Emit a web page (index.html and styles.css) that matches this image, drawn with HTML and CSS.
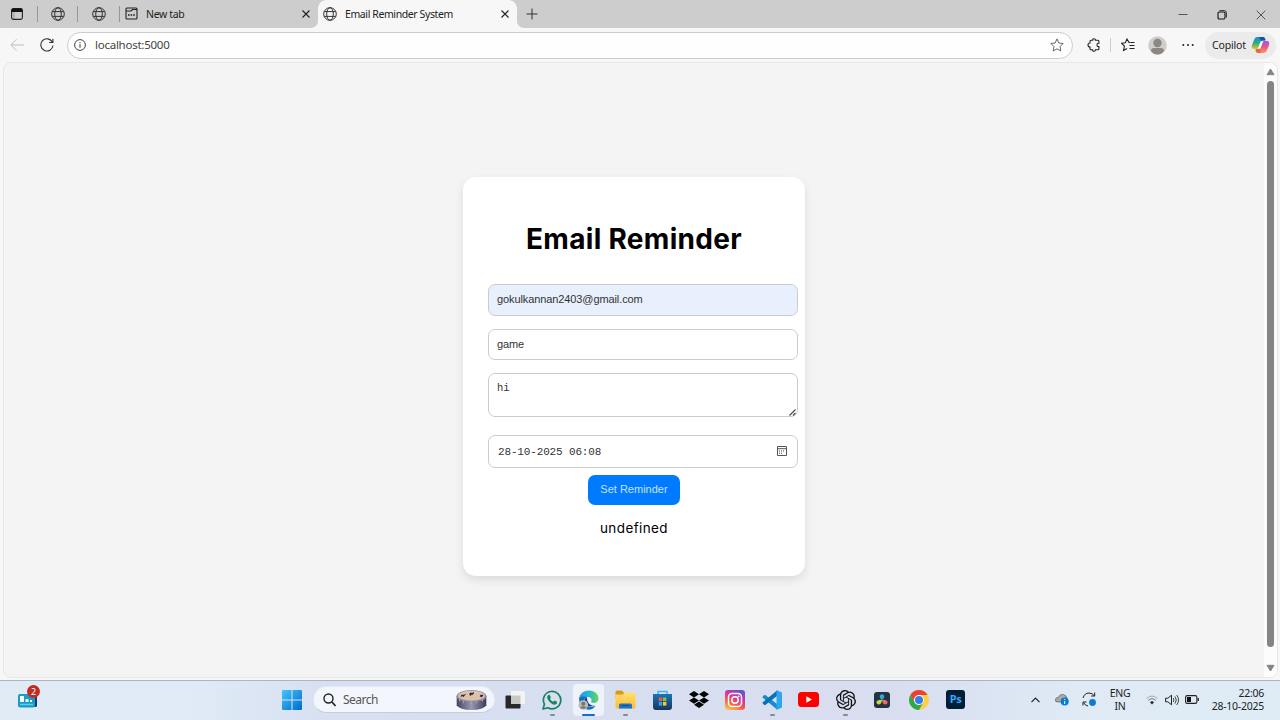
FILE: index.html
```html
<!DOCTYPE html>
<html lang="en">
<head>
<meta charset="utf-8">
<title>Email Reminder System</title>
<link rel="stylesheet" href="styles.css">
</head>
<body>
<svg class="defs" width="0" height="0">
  <symbol id="globe" viewBox="0 0 14 14"><g fill="none" stroke="#333" stroke-width="1"><circle cx="7" cy="7" r="6.3"/><ellipse cx="7" cy="7" rx="3.300" ry="6.3"/><path d="M1.3 4.6h11.4M1.3 9.4h11.4"/></g></symbol>
  <symbol id="close" viewBox="0 0 10 10"><path d="M1.5 1.5l7 7M8.5 1.5l-7 7" stroke="#222" stroke-width="1.1" fill="none"/></symbol>
</svg>
<header class="tabs">
  <div class="pin pin-a"><svg width="14" height="14" viewBox="0 0 14 14"><rect x="1.6" y="1.6" width="10.8" height="10.8" rx="1.8" fill="none" stroke="#222" stroke-width="1.1"/><path d="M1.6 5V3q0-1.500 1.500-1.500h7.800q1.500 0 1.500 1.500v2z" fill="#111"/><path d="M4 5v7" stroke="#777" stroke-width=".6"/></svg></div>
  <div class="pin pin-b"><svg width="14" height="14"><use href="#globe"/></svg></div>
  <div class="pin pin-c"><svg width="14" height="14"><use href="#globe"/></svg></div>
  <div class="tab idle"><svg width="13" height="13" viewBox="0 0 13 13"><path d="M1 3.500V2q0-1 1-1h9q1 0 1 1v9q0 1-1 1H2q-1 0-1-1zM1 4h5L7.500 2.500H12" fill="none" stroke="#222" stroke-width="1.1"/><path d="M3 8h1.600m1 0h1.600m1 0h1.600" stroke="#222" stroke-width="1.600"/></svg><span class="t-new">New tab</span><svg class="x" width="10" height="10"><use href="#close"/></svg></div>
  <div class="tab active"><svg width="14" height="14"><use href="#globe"/></svg><span class="t-mail">Email Reminder System</span><svg class="x" width="10" height="10"><use href="#close"/></svg></div>
  <div class="rest"><svg width="12" height="12" viewBox="0 0 12 12"><path d="M6 .5v11M.5 6h11" stroke="#333" stroke-width="1"/></svg>
    <div class="win"><svg class="min" width="10" height="10" viewBox="0 0 10 10"><path d="M.5 4.500h9" stroke="#555"/></svg><svg width="10" height="10" viewBox="0 0 10 10"><rect x="1" y="2" width="7" height="7" rx="1.200" fill="none" stroke="#111" stroke-width="1.100"/><path d="M2.500.600h4.700q2.200 0 2.200 2.200v4.700" fill="none" stroke="#222" stroke-width=".9"/></svg><svg width="10" height="10" viewBox="0 0 10 10"><path d="M.7.7l8.600 8.600M9.300.7L.7 9.300" stroke="#444" stroke-width=".9"/></svg></div>
  </div>
</header>
<nav class="toolbar">
  <svg class="back" width="14" height="14" viewBox="0 0 14 14"><path d="M14 7H1M6.500 1.200L.8 7l5.700 5.800" fill="none" stroke="#bbb"/></svg>
  <svg class="reload" width="14" height="14" viewBox="0 0 14 14"><path d="M12.300 4A6.100 6.100 0 1 0 13 7.500M12.900.8v3.700H9.200" fill="none" stroke="#333" stroke-width="1.100"/></svg>
  <div class="address"><svg width="12" height="12" viewBox="0 0 12 12"><circle cx="6" cy="6" r="5.400" fill="none" stroke="#444"/><path d="M6 5.200v3.500M6 3.200v1" stroke="#333"/></svg><span>localhost:5000</span><svg class="star" width="14" height="14" viewBox="0 0 16 16"><path d="M8 1l2.100 4.700 4.900.6-3.500 3.500.9 5L8 12.400l-4.400 2.400.9-5L1 6.300l4.900-.6z" fill="none" stroke="#555" stroke-linejoin="round"/></svg></div>
  <svg class="ext" width="14" height="14" viewBox="0 0 14 14"><path d="M4 2.200h1.700Q5.500.7 7 .7t1.400 1.500h2.500q1 0 1 1v2.100Q10 5.200 10 7t1.900 1.600v2.200q0 1-1 1H8.500Q8.500 13.300 7 13.300t-1.400-1.500H4q-1 0-1-1V9Q1 9 1 7t2-2V3.200q0-1 1-1z" fill="none" stroke="#222" stroke-width="1.100"/></svg>
  <i class="sep"></i>
  <svg class="fav" width="14" height="14" viewBox="0 0 14 14"><path d="M9 4.500H8L6 1 4.300 4.700l-3.700.6L3.400 8l-.8 4.500L6 10.600M9.300 4.500h4.200M8.500 7.500h5M8.500 10.500h5" fill="none" stroke="#222" stroke-width="1.100"/></svg>
  <svg class="avatar" width="19" height="19" viewBox="0 0 19 19"><circle cx="9.500" cy="9.500" r="9.300" fill="#d0cecb"/><circle cx="9.500" cy="7" r="4.200" fill="#8b8783"/><path d="M3 15q0-3 3-3h7q3 0 3 3-2.500 3.500-6.500 3.500T3 15z" fill="#8b8783"/></svg>
  <svg class="dots" width="12" height="4" viewBox="0 0 12 4"><g fill="#222"><circle cx="1.300" cy="2" r="1"/><circle cx="6" cy="2" r="1"/><circle cx="10.700" cy="2" r="1"/></g></svg>
  <div class="copilot"><span>Copilot</span><svg width="19" height="18" viewBox="0 0 19 18"><defs><linearGradient id="cl" x2="0" y2="1"><stop stop-color="#168bd9"/><stop offset=".5" stop-color="#27af83"/><stop offset="1" stop-color="#e5c52a"/></linearGradient><linearGradient id="cr" x2="0" y2="1"><stop stop-color="#a653df"/><stop offset=".5" stop-color="#ee5787"/><stop offset="1" stop-color="#ff9852"/></linearGradient></defs><path d="M6 1h6q2 0 2.500 3l-4 1-4 8H3q-3 0-2-4l2-5q1-3 3-3z" fill="url(#cl)"/><path d="M8 1h4q2 0 2.500 3.500H9.800z" fill="#194db5"/><path d="M13 17H7q-2 0-2.500-3l4-1 4-8H16q3 0 2 4l-2 5q-1 3-3 3z" fill="url(#cr)"/><path d="M4.500 13h4.300L10 17H7q-2 0-2.500-4z" fill="#f26543"/><path d="M9.500 5.500h2.200L9.500 12.500H7.300z" fill="#fff"/></svg></div>
</nav>
<main class="page">
  <section class="stage">
    <form class="card">
      <h1><span>Email Reminder</span></h1>
      <div class="field email"><span>gokulkannan2403@gmail.com</span></div>
      <div class="field subject"><span>game</span></div>
      <div class="field message"><span>hi</span><svg width="7" height="7" viewBox="0 0 7 7"><path d="M.5 6.500l6-6M4 6.500l2.500-2.500" stroke="#444" stroke-width="1.100"/></svg></div>
      <div class="field date"><span>28-10-2025 06:08</span><svg width="10" height="10" viewBox="0 0 10 10"><path d="M.5.500h9v9h-9zM.5 2.700h9" fill="none" stroke="#555"/><path d="M2 5h6M2 7.200h4" stroke="#444" stroke-dasharray="1 1"/></svg></div>
      <button type="button"><span>Set Reminder</span></button>
      <p><span>undefined</span></p>
    </form>
  </section>
  <aside class="scroll"><svg width="9" height="8" viewBox="0 0 9 8"><path d="M4.500 1L8 6.700H1z" fill="#858585" stroke="#858585" stroke-linejoin="round"/></svg><i></i><svg width="9" height="8" viewBox="0 0 9 8"><path d="M4.500 7L8 1.300H1z" fill="#858585" stroke="#858585" stroke-linejoin="round"/></svg></aside>
</main>
<footer class="taskbar">
  <div class="widget"><svg width="20" height="16" viewBox="0 0 20 16"><rect x="14" y="3" width="5" height="12" rx="1.500" fill="#173c70"/><rect y="2" width="17" height="13.500" rx="2" fill="#199bc6"/><path d="M2 4h4v6H2zM7.500 7h3v3h-3zM12 8h2v2h-2z" fill="#f3fbff"/><path d="M2 12.500h13" stroke="#53d1ee" stroke-width="1.500"/></svg><b>2</b></div>
  <svg class="start" width="20" height="20" viewBox="0 0 20 20"><defs><linearGradient id="w" x2="1" y2="1"><stop stop-color="#42c8f8"/><stop offset="1" stop-color="#0069ce"/></linearGradient></defs><path d="M0 1q0-1 1-1h8.500v9.500H0zM10.500 0H19q1 0 1 1v8.500h-9.500zM0 10.500h9.500V20H1q-1 0-1-1zM10.500 10.500H20V19q0 1-1 1h-8.500z" fill="url(#w)"/></svg>
  <div class="search"><svg width="13" height="14" viewBox="0 0 13 14"><circle cx="5.500" cy="5.500" r="4.500" fill="none" stroke="#222" stroke-width="1.400"/><path d="M9 9l3.500 4" stroke="#222" stroke-width="1.600"/></svg><span>Search</span>
    <svg class="art" width="33" height="22" viewBox="0 0 33 23"><defs><linearGradient id="drum"><stop stop-color="#454561"/><stop offset=".5" stop-color="#9a96b1"/><stop offset="1" stop-color="#3d3c57"/></linearGradient></defs><path d="M1 7v10q3 5 15.500 5T32 17V7z" fill="url(#drum)"/><ellipse cx="16.500" cy="7.500" rx="15.500" ry="6.500" fill="#8a88a0"/><ellipse cx="16.500" cy="7" rx="14" ry="5.200" fill="#dcc2a7"/><path d="M5 7.500l1-1.500h3l1-1 .5 1-1.500 1-.5 1.500-1-1H6v1.500zm9-2l1-1.500h3l1-1v1.500l-1 1.500h-2v1.500zm11 2l1-1.500h2l1 1-1.500 1-1 1-.5-1z" fill="#302050"/><path d="M4 11v2m4-.5v2.500m8-2v2.500m6-3v2.500m6-4v2" stroke="#b5b0c6" stroke-width=".9"/></svg>
  </div>
  <div class="apps">
    <div><svg width="22" height="20" viewBox="0 0 22 20"><rect x="1.500" y="5.500" width="15" height="13" rx="1" fill="#282828"/><rect x="7" y="1" width="14" height="13" rx="1" fill="#f3f3f1"/><path d="M7 5.500h9.500V14H7z" fill="#c8c8c7"/></svg></div>
    <div class="run"><svg width="20" height="20" viewBox="0 0 20 20"><path d="M1 19l1.400-4.800A8.700 8.700 0 1 1 5.800 17.700z" fill="none" stroke="#178460" stroke-width="1.700" stroke-linejoin="round"/><path d="M6 5.300q.8-.9 1.700-.2L8.900 7.500l-.9 1.200q1.200 2.300 3.300 3l1.200-1.100 2.500 1.200q.5 2.300-2.200 2.900-2.200 0-4.800-2.500Q5 9 5.200 7.200q0-1 .8-1.900z" fill="#178460"/></svg></div>
    <div class="run current"><svg width="21" height="20" viewBox="0 0 21 20"><defs><linearGradient id="et"><stop stop-color="#2798e1"/><stop offset=".5" stop-color="#24b8d4"/><stop offset="1" stop-color="#67d852"/></linearGradient></defs><path d="M1 8Q3 .5 11 .5c6 0 9.500 4 9.500 8 0 3-2.500 4.500-5 4.500-2 0-3-.8-2-2 .7-2-1-4-4-4Q4 6 1 8z" fill="url(#et)"/><path d="M1 8q4-3 8-1c-3 1-3.500 4-2 7 2 3 7 4 11 1.500-4 6-12 5-15 0Q1 13 1 8z" fill="#136dc0"/><path d="M9 7q-4 2-2.500 7 3 4 11 1.800-5 .2-7-2.800-2-3-1.500-6z" fill="#123f87"/><circle cx="5.300" cy="15" r="4.800" fill="#bebbb7"/><circle cx="5.300" cy="13.700" r="2" fill="#77736f"/><path d="M2 17.500q3.300-2.500 6.600 0-3.300 2.700-6.600 0z" fill="#77736f"/></svg></div>
    <div class="run"><svg width="21" height="19" viewBox="0 0 21 19"><defs><linearGradient id="fo" x2="0" y2="1"><stop stop-color="#ffe071"/><stop offset="1" stop-color="#ffbb32"/></linearGradient></defs><path d="M.5 2q0-1.500 1.500-1.500h5L9 3H20v5H.5z" fill="#d99b16"/><path d="M.5 4.500H8l2-2h9q1.500 0 1.500 1.500v13q0 1.500-1.500 1.500H2Q.5 18.500.5 17z" fill="url(#fo)"/><path d="M4 18.500V15q0-1.500 1.500-1.500h10Q17 13.500 17 15v3.500z" fill="#1675c9"/><path d="M7 15.500h7" stroke="#104c94"/></svg></div>
    <div><svg width="19" height="20" viewBox="0 0 19 20"><path d="M5 5V1.500h9V5" fill="none" stroke="#37b9ef" stroke-width="1.500"/><defs><linearGradient id="st" x2="0" y2="1"><stop stop-color="#1b73b9"/><stop offset="1" stop-color="#183757"/></linearGradient></defs><path d="M0 4h19v13q0 3-3 3H3q-3 0-3-3z" fill="url(#st)"/><path d="M5.800 7.500h3.400v3.600H5.800z" fill="#f65939"/><path d="M10 7.500h3.400v3.600H10z" fill="#82c43c"/><path d="M5.800 12h3.400v3.600H5.800z" fill="#22a7f0"/><path d="M10 12h3.400v3.600H10z" fill="#ffc436"/></svg></div>
    <div><svg width="20" height="17" viewBox="0 0 20 17"><path d="M5 0l5 3.200L5 6.400 0 3.200zm10 0l5 3.200-5 3.200-5-3.200zM5 6.400l5 3.200-5 3.200L0 9.600zm10 0l5 3.200-5 3.200-5-3.200zM10 10.600l5 3.200-5 3.200-5-3.200z" fill="#050505"/></svg></div>
    <div><svg width="20" height="20" viewBox="0 0 20 20"><defs><linearGradient id="ig" x1=".2" y1="1" x2=".7" y2="0"><stop stop-color="#ffc247"/><stop offset=".35" stop-color="#f55b47"/><stop offset=".65" stop-color="#d832a0"/><stop offset="1" stop-color="#6553ce"/></linearGradient></defs><rect width="20" height="20" rx="3" fill="url(#ig)"/><rect x="3.500" y="3.500" width="13" height="13" rx="3.500" fill="none" stroke="#fff" stroke-width="1.500"/><circle cx="10" cy="10" r="3.200" fill="none" stroke="#fff" stroke-width="1.500"/><circle cx="13.700" cy="6.300" r=".9" fill="#fff"/></svg></div>
    <div class="run"><svg width="20" height="20" viewBox="0 0 20 20"><path d="M1 6l2-1.200L15 14v5.500L.5 7.500z" fill="#168bd2"/><path d="M1 14l2 1.200L15 6V.5L.5 12.500z" fill="#0872b7"/><path d="M14.500 0L20 2.500v15L14.500 20z" fill="#2ca7ed"/></svg></div>
    <div><svg width="21" height="15" viewBox="0 0 21 15"><rect width="21" height="15" rx="3.500" fill="#f00"/><path d="M8.300 4.300l5.800 3.200-5.800 3.200z" fill="#fff"/></svg></div>
    <div class="run"><svg width="20" height="20" viewBox="0 0 24 24"><path d="M22.2819 9.8211a5.9847 5.9847 0 0 0-.5157-4.9108 6.0462 6.0462 0 0 0-6.5098-2.9A6.0651 6.0651 0 0 0 4.9807 4.1818a5.9847 5.9847 0 0 0-3.9977 2.9 6.0462 6.0462 0 0 0 .7427 7.0966 5.98 5.98 0 0 0 .511 4.9107 6.051 6.051 0 0 0 6.5146 2.9001A5.9847 5.9847 0 0 0 13.2599 24a6.0557 6.0557 0 0 0 5.7718-4.2058 5.9894 5.9894 0 0 0 3.9977-2.9001 6.0557 6.0557 0 0 0-.7475-7.0729zm-9.022 12.6081a4.4755 4.4755 0 0 1-2.8764-1.0408l.1419-.0804 4.7783-2.7582a.7948.7948 0 0 0 .3927-.6813v-6.7369l2.02 1.1686a.071.071 0 0 1 .038.052v5.5826a4.504 4.504 0 0 1-4.4945 4.4944zm-9.6607-4.1254a4.4708 4.4708 0 0 1-.5346-3.0137l.142.0852 4.783 2.7582a.7712.7712 0 0 0 .7806 0l5.8428-3.3685v2.3324a.0804.0804 0 0 1-.0332.0615L9.74 19.9502a4.4992 4.4992 0 0 1-6.1408-1.6464zM2.3408 7.8956a4.485 4.485 0 0 1 2.3655-1.9728V11.6a.7664.7664 0 0 0 .3879.6765l5.8144 3.3543-2.0201 1.1685a.0757.0757 0 0 1-.071 0l-4.8303-2.7865A4.504 4.504 0 0 1 2.3408 7.872zm16.5963 3.8558L13.1038 8.364 15.1192 7.2a.0757.0757 0 0 1 .071 0l4.8303 2.7913a4.4944 4.4944 0 0 1-.6765 8.1042v-5.6772a.79.79 0 0 0-.407-.667zm2.0107-3.0231l-.142-.0852-4.7735-2.7818a.7759.7759 0 0 0-.7854 0L9.409 9.2297V6.8974a.0662.0662 0 0 1 .0284-.0615l4.8303-2.7866a4.4992 4.4992 0 0 1 6.6802 4.66zM8.3065 12.863l-2.02-1.1638a.0804.0804 0 0 1-.038-.0567V6.0742a4.4992 4.4992 0 0 1 7.3757-3.4537l-.142.0805L8.704 5.459a.7948.7948 0 0 0-.3927.6813zm1.0976-2.3654l2.602-1.4998 2.6069 1.4998v2.9994l-2.5974 1.4997-2.6067-1.4997Z" fill="#111"/></svg></div>
    <div><svg width="16" height="16" viewBox="0 0 16 16"><rect width="16" height="16" rx="3" fill="#243342"/><path d="M8 8Q5 5.500 6 3.500 8 1 10 3.500 11 5.500 8 8z" fill="#31add3"/><path d="M8 8q-.5 4-3 4.500Q2 12 2.500 9.500 4.500 7 8 8z" fill="#c1d94e"/><path d="M8 8q3.500-1 5.500 1.500.5 2.500-2.500 3Q8.500 12 8 8z" fill="#ec6d64"/></svg></div>
    <div><svg width="20" height="20" viewBox="0 0 20 20"><circle cx="10" cy="10" r="10" fill="#ffce42"/><path d="M1.340 5A10 10 0 0 1 18.660 5H10L5.700 12.500z" fill="#e84335"/><path d="M1.340 5L5.700 12.500Q7.300 15 10 15l4.200-2.500L10 20A10 10 0 0 1 1.340 5z" fill="#2ea84f"/><circle cx="10" cy="10" r="5" fill="#fff"/><circle cx="10" cy="10" r="4" fill="#347de9"/></svg></div>
    <div><span class="ps">Ps</span></div>
  </div>
  <div class="tray">
    <svg class="up" width="9" height="6" viewBox="0 0 9 6"><path d="M.5 5.200l4-4 4 4" fill="none" stroke="#222" stroke-width="1.200"/></svg>
    <svg class="cloud" width="14" height="13" viewBox="0 0 14 13"><path d="M3 9Q0 9 .4 6.500.8 4.500 3 4.500 5 .8 8.500 1.500q3 .8 3.500 4v3z" fill="#aaa" stroke="#666" stroke-width=".8"/><circle cx="9.700" cy="8.500" r="4" fill="#087bd4"/><path d="M9.700 8v3M9.700 6v1" stroke="#fff"/></svg>
    <svg class="sync" width="14" height="15" viewBox="0 0 14 15"><path d="M1 6Q2.500 1 7 1q3.500 0 5.500 3M12.700.5V4H9.200M1 13.500V10h3.500M1.500 10.500Q3 13.500 6 14" fill="none" stroke="#222"/><circle cx="10.500" cy="10.500" r="3.400" fill="#0b7cd6"/></svg>
    <div class="lang"><span>ENG</span><span>IN</span></div>
    <svg class="wifi" width="12" height="10" viewBox="0 0 12 10"><path d="M.5 3.500Q6-1.500 11.500 3.500" fill="none" stroke="#aaa"/><path d="M2.300 5.400Q6 2 9.700 5.400" fill="none" stroke="#777"/><path d="M4 7.200Q6 5.200 8 7.200L6 9.500z" fill="#222"/></svg>
    <svg class="sound" width="14" height="12" viewBox="0 0 14 12"><path d="M.6 4.200h2.300L6.500 1.200v9.600L2.900 7.800H.6z" fill="none" stroke="#222"/><path d="M8.300 4q1.300 2 0 4M10 2.500q2.600 3.500 0 7M11.700 1q3.700 5 0 10" fill="none" stroke="#333" stroke-width=".9"/></svg>
    <svg class="battery" width="14" height="9" viewBox="0 0 14 9"><rect x=".6" y=".6" width="11.300" height="7.800" rx="1.700" fill="none" stroke="#222" stroke-width="1.100"/><path d="M2 2h4v5H2z" fill="#111"/><path d="M13.200 3v3" stroke="#222" stroke-width="1.300"/></svg>
    <div class="clock"><span class="time">22:06</span><span class="day">28-10-2025</span></div>
  </div>
</footer>
</body>
</html>
```
FILE: styles.css
```css
* { box-sizing: border-box; }
html, body { margin: 0; width: 1280px; height: 720px; overflow: hidden; }
body { display: flex; flex-direction: column; background: #f7f7f7; color: #222; font-family: "Noto Sans", sans-serif; font-size: 10.500px; }
svg { display: block; flex: none; }
span { white-space: nowrap; }
.defs { display: none; }

.tabs { display: flex; height: 28px; flex: none; background: #f7f7f7; }
.pin, .idle, .rest { background: #cdcdcd; }
.pin { display: flex; align-items: center; padding-bottom: 1px; }
.pin::after { content: ""; width: 1px; height: 16px; margin-left: auto; background: #969696; }
.pin-a { width: 38px; padding-left: 10px; }
.pin-b { width: 40px; padding-left: 13px; }
.pin-c { width: 42px; padding-left: 14px; }
.tab { display: flex; align-items: center; }
.tab .x { margin-left: auto; }
.idle { width: 198px; padding: 0 7px 1px 5px; border-radius: 0 0 7px 0; }
.active { width: 199px; padding: 0 7px 1px 5px; background: radial-gradient(circle at 8px 8px, #f7f7f7 7.500px, #cdcdcd 8px) 0 0 / 8px 8px no-repeat, radial-gradient(circle at 0 8px, #f7f7f7 7.500px, #cdcdcd 8px) 100% 0 / 8px 8px no-repeat, #f7f7f7; }
.t-new { margin-left: 8px; letter-spacing: -.35px; }
.t-mail { margin-left: 8px; letter-spacing: -.4px; }
.rest { display: flex; flex: 1; align-items: center; padding: 0 14px 1px 9px; border-radius: 0 0 0 7px; }
.win { display: flex; gap: 29px; margin-left: auto; padding-top: 2px; }

.toolbar { display: flex; align-items: center; height: 34px; flex: none; padding-left: 10px; }
.reload { margin-left: 16px; }
.address { display: flex; align-items: center; width: 1006px; height: 27px; margin-left: 13px; padding: 0 8px 0 6px; border: 1px solid #ccc; border-radius: 14px; background: #fefefe; }
.address span { margin-left: 9px; padding-bottom: 1px; font-size: 11.500px; letter-spacing: -.25px; color: #444; }
.star { margin-left: auto; }
.ext { margin-left: 14px; }
.sep { width: 1px; height: 14px; margin: 0 10px 0 9px; background: #ccc; }
.avatar { margin-left: 13px; }
.dots { margin-left: 15px; }
.copilot { display: flex; align-items: center; justify-content: space-between; width: 71px; height: 27px; margin-left: 11px; padding: 0 6px 0 7px; border-radius: 14px; background: #ebebeb; }
.copilot span { letter-spacing: -.15px; padding-bottom: 1px; }

.page { display: flex; height: 616px; flex: none; margin: 0 2px 0 3px; border: 1px solid #e8e8e8; border-radius: 8px; overflow: hidden; background: #f4f4f4; }
.stage { flex: 1; padding: 114px 0 0 459px; }
.card { width: 342px; height: 399px; padding: 0 7px 0 25px; border-radius: 13px; background: #fff; box-shadow: 0 4px 10px rgba(0, 0, 0, .1); }
.card h1 { display: flex; justify-content: center; align-items: center; width: 292px; height: 107px; padding-top: 17px; margin: 0; color: #000; font: 700 28px/34px Inter, sans-serif; letter-spacing: .3px; }
.field { display: flex; align-items: center; width: 310px; height: 32px; padding: 0 10px 2px 8px; border: 1px solid #ccc; border-radius: 7px; color: #333; font: 11px "Liberation Sans", sans-serif; letter-spacing: -.1px; }
.email { background: #e8f0fe; }
.subject { height: 31px; margin-top: 13px; }
.message { height: 44px; margin-top: 13px; padding: 8px 1px 0 8px; align-items: flex-start; font: 10.500px "Liberation Mono", monospace; letter-spacing: -.1px; }
.message svg { margin: 27px 0 0 auto; }
.date { height: 33px; margin-top: 18px; padding: 0 10px 0 9px; font: 11px "Liberation Mono", monospace; letter-spacing: -.15px; }
.date svg { margin-left: auto; margin-bottom: 1px; }
.card button { display: flex; align-items: center; justify-content: center; width: 92px; height: 30px; margin: 7px 0 0 100px; padding: 0 0 2px; border: 0; border-radius: 7px; background: #007bff; color: #c4e2ff; font: 11px "Liberation Sans", sans-serif; }
.card p { display: flex; justify-content: center; width: 292px; margin: 14px 0 0; color: #000; font: 13.500px/19px Inter, sans-serif; letter-spacing: .4px; }

.scroll { display: flex; flex-direction: column; align-items: center; width: 13px; padding: 5px 0; background: #fcfcfc; }
.scroll i { width: 7px; height: 566px; margin: 5px 0 17px; border-radius: 4px; background: #858585; }

.taskbar { display: flex; align-items: center; height: 40px; flex: none; margin-top: 2px; padding-bottom: 2px; border-top: 1px solid #aeb5c0; background: linear-gradient(90deg, #e0ebf6, #dfeaf6 16%, #d7dff1 26%, #d8def0 70%, #dfeaf5 84%, #dfebf5); }
.widget { position: relative; width: 264px; margin-left: 18px; }
.widget b { position: absolute; top: -7px; left: 9px; width: 13px; height: 13px; border-radius: 50%; background: #c42b20; color: #fff; font: 9px/13px "Noto Sans", sans-serif; text-align: center; }
.search { display: flex; align-items: center; width: 182px; height: 27px; margin-left: 11px; padding: 0 6px 0 9px; border: 1px solid #e4e8f2; border-bottom-color: #c7cedd; border-radius: 14px; background: #f3f6fc; }
.search span { margin-left: 7px; font-size: 12px; letter-spacing: -.5px; color: #555; }
.art { margin-left: auto; }
.apps { display: flex; margin-left: 2px; }
.apps > div { display: flex; align-items: center; justify-content: center; position: relative; width: 36.700px; height: 32px; }
.run::after { content: ""; position: absolute; bottom: 0; width: 5px; height: 2px; border-radius: 1px; background: #858995; }
.current::before { content: ""; position: absolute; inset: 0 3px; border-radius: 4px; background: #edf2fb; }
.current svg { position: relative; }
.current::after { width: 13px; background: #0d70cc; }
.ps { width: 19px; height: 19px; border-radius: 3px; background: #001e36; color: #31a8ff; font: 700 11px/18px "Noto Sans", sans-serif; text-align: center; letter-spacing: -.3px; }
.tray { display: flex; align-items: center; margin-left: auto; padding-right: 16px; }
.cloud { margin-left: 15px; }
.sync { margin-left: 13px; }
.lang, .clock { display: flex; flex-direction: column; align-items: center; font-size: 10.500px; line-height: 13px; letter-spacing: -.25px; }
.lang { width: 24px; margin-left: 12px; }
.wifi { margin-left: 14px; }
.sound { margin-left: 7px; }
.battery { margin-left: 6px; }
.clock { width: 53px; margin-left: 12px; align-items: flex-end; }
```
